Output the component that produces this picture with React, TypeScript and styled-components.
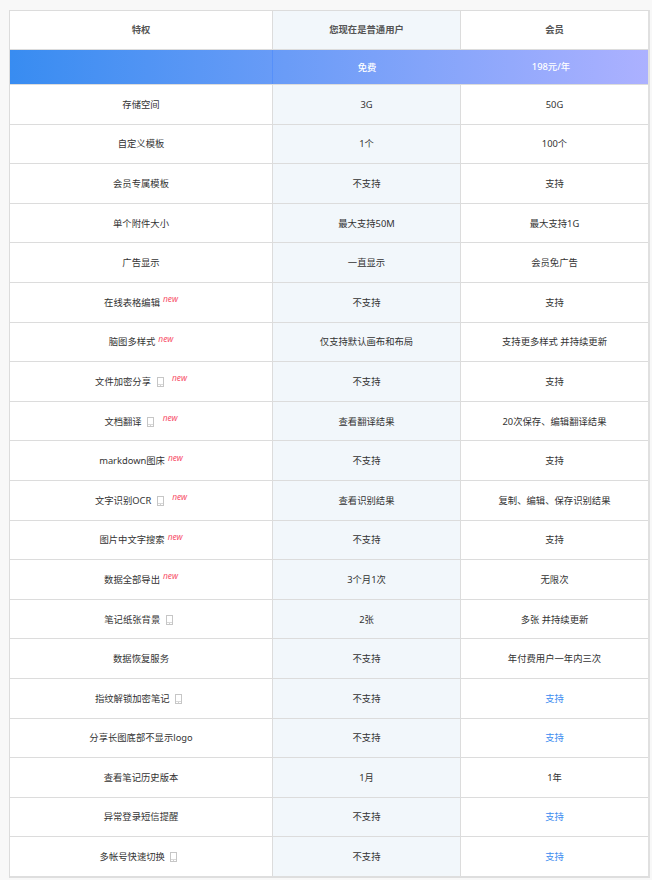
import React from "react";
import styled, { createGlobalStyle } from "styled-components";

const Global = createGlobalStyle`
  html, body { margin: 0; padding: 0; background: #f8f8f8; }
  body { font-family: "Noto Sans", "Noto Sans CJK SC", sans-serif; }
`;

const Page = styled.div`
  width: 652px;
  height: 880px;
  padding: 10px 2px 0 9px;
  box-sizing: border-box;
  overflow: hidden;
`;

const Table = styled.div`
  width: 641px;
  border: 1px solid #dcdcdc;
  border-right: 2px solid #e0e0e0;
  border-bottom: 2px solid #dedede;
  box-sizing: border-box;
  background: #fff;
`;

const Row = styled.div<{ $height: number; $banner?: boolean }>`
  display: grid;
  grid-template-columns: 263px 188px 1fr;
  height: ${(p) => p.$height}px;
  box-sizing: border-box;
  border-bottom: 1px solid #dcdcdc;
  background: ${(p) => (p.$banner ? "linear-gradient(90deg, #388cf1 0%, #acb1ff 100%)" : "transparent")};
  &:last-child { border-bottom: none; }
`;

const Cell = styled.div<{ $tint?: boolean; $divider?: boolean; $trail?: number }>`
  display: flex;
  align-items: center;
  justify-content: center;
  padding-top: 1px;
  padding-right: ${(p) => p.$trail ?? 0}px;
  font-size: 9.33px;
  line-height: 14px;
  color: #333;
  white-space: nowrap;
  box-sizing: border-box;
  background: ${(p) => (p.$tint ? "#f2f7fb" : "transparent")};
  border-right: ${(p) => (p.$divider ? "1px solid #dcdcdc" : "none")};
`;

const HeadCell = styled(Cell)`
  padding-top: 0;
  font-weight: 700;
  color: #555;
`;

const BannerCell = styled(Cell)<{ $line?: boolean }>`
  color: #fff;
  font-weight: 500;
  border-right: ${(p) => (p.$line ? "1px solid rgba(80,140,250,.75)" : "none")};
`;

const PriceCell = styled(BannerCell)`
  padding-top: 0;
  padding-right: 7px;
`;

const Link = styled.span`
  color: #3c8cf0;
`;

const NewTag = styled.em`
  position: relative;
  top: -3.5px;
  margin-left: 3px;
  font-family: "Noto Sans", sans-serif;
  font-size: 8.4px;
  line-height: 10px;
  font-style: italic;
  color: #f7506a;
`;

const PhoneIcon = styled.svg`
  display: block;
  flex: none;
  width: 7px;
  height: 10px;
  margin-left: 5.5px;
`;

const IconGap = styled.span`
  display: inline-block;
  width: 5.5px;
`;

const Phone = () => (
  <PhoneIcon viewBox="0 0 7 10" fill="none">
    <rect x="0.5" y="0.5" width="6" height="9" stroke="#c6c6c6" />
    <path d="M1 7.5H6" stroke="#d8d8d8" />
    <path d="M3 8.5H4" stroke="#d0d0d0" />
  </PhoneIcon>
);

type Item = {
  name: string;
  phone?: boolean;
  fresh?: boolean;
  free: string;
  member: string;
  link?: boolean;
};

const items: Item[] = [
  { name: "存储空间", free: "3G", member: "50G" },
  { name: "自定义模板", free: "1个", member: "100个" },
  { name: "会员专属模板", free: "不支持", member: "支持" },
  { name: "单个附件大小", free: "最大支持50M", member: "最大支持1G" },
  { name: "广告显示", free: "一直显示", member: "会员免广告" },
  { name: "在线表格编辑", fresh: true, free: "不支持", member: "支持" },
  { name: "脑图多样式", fresh: true, free: "仅支持默认画布和布局", member: "支持更多样式 并持续更新" },
  { name: "文件加密分享", phone: true, fresh: true, free: "不支持", member: "支持" },
  { name: "文档翻译", phone: true, fresh: true, free: "查看翻译结果", member: "20次保存、编辑翻译结果" },
  { name: "markdown图床", fresh: true, free: "不支持", member: "支持" },
  { name: "文字识别OCR", phone: true, fresh: true, free: "查看识别结果", member: "复制、编辑、保存识别结果" },
  { name: "图片中文字搜索", fresh: true, free: "不支持", member: "支持" },
  { name: "数据全部导出", fresh: true, free: "3个月1次", member: "无限次" },
  { name: "笔记纸张背景", phone: true, free: "2张", member: "多张 并持续更新" },
  { name: "数据恢复服务", free: "不支持", member: "年付费用户一年内三次" },
  { name: "指纹解锁加密笔记", phone: true, free: "不支持", member: "支持", link: true },
  { name: "分享长图底部不显示logo", free: "不支持", member: "支持", link: true },
  { name: "查看笔记历史版本", free: "1月", member: "1年" },
  { name: "异常登录短信提醒", free: "不支持", member: "支持", link: true },
  { name: "多帐号快速切换", phone: true, free: "不支持", member: "支持", link: true },
];

export default function App() {
  return (
    <Page>
      <Global />
      <Table>
        <Row $height={39}>
          <HeadCell $divider>特权</HeadCell>
          <HeadCell $tint $divider>您现在是普通用户</HeadCell>
          <HeadCell>会员</HeadCell>
        </Row>
        <Row $height={35} $banner>
          <BannerCell $line />
          <BannerCell>免费</BannerCell>
          <PriceCell>198元/年</PriceCell>
        </Row>
        {items.map((it, i) => (
          <Row key={it.name} $height={i === items.length - 1 ? 39 : 39.6}>
            <Cell $divider $trail={it.phone && !it.fresh ? 5 : 0}>
              {it.name}
              {it.phone && <Phone />}
              {it.phone && it.fresh && <IconGap />}
              {it.fresh && <NewTag>new</NewTag>}
            </Cell>
            <Cell $tint $divider>{it.free}</Cell>
            <Cell>{it.link ? <Link>{it.member}</Link> : it.member}</Cell>
          </Row>
        ))}
      </Table>
    </Page>
  );
}
